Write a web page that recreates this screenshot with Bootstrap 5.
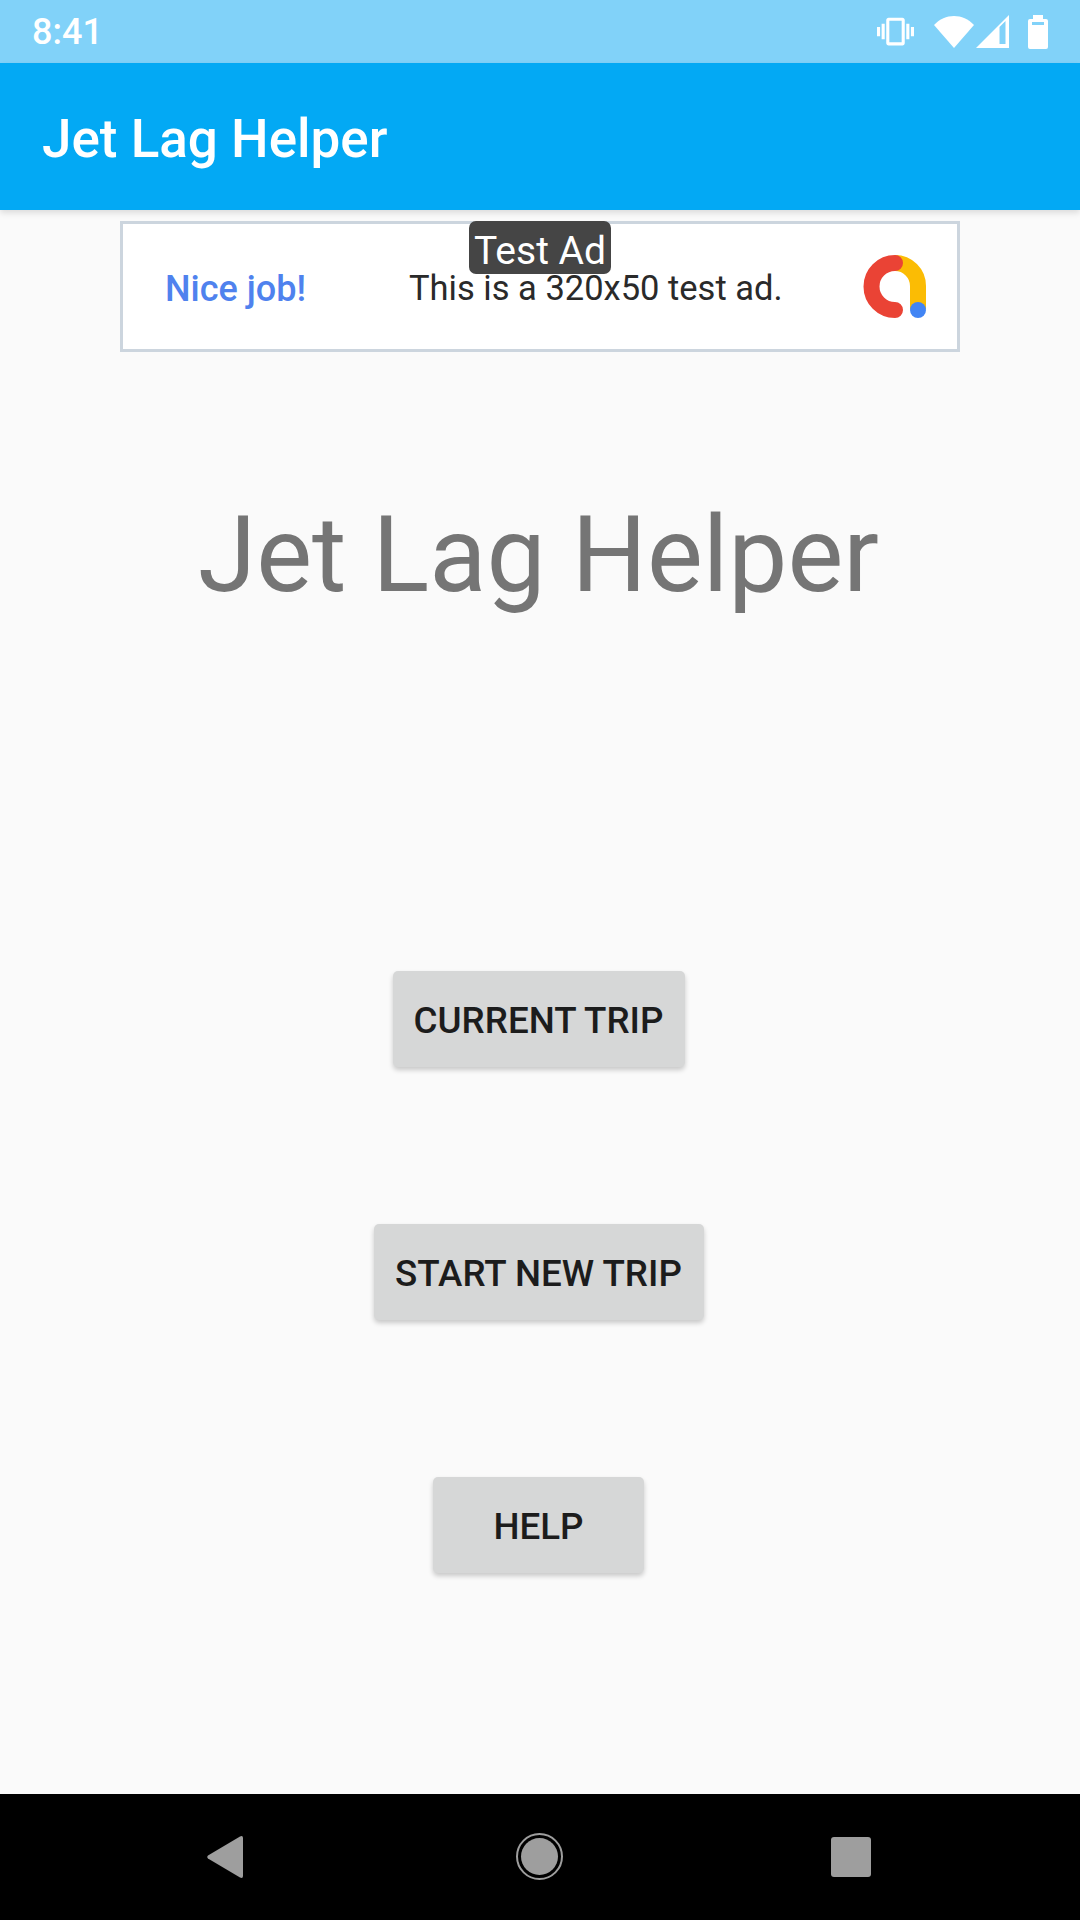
<!DOCTYPE html>
<html lang="en">
<head>
  <meta charset="UTF-8" />
  <title>Jet Lag Helper</title>
  <link href="https://cdn.jsdelivr.net/npm/bootstrap@5.3.3/dist/css/bootstrap.min.css" rel="stylesheet" />
  <style>
    body { width: 1080px; height: 1920px; background: #fafafa; font-family: Roboto, "Liberation Sans", sans-serif; overflow: hidden; }
    .status-strip { height: 63px; background: #81d2f9; padding-left: 32px; }
    .status-time { font-size: 36px; font-weight: 500; line-height: 1; }
    .status-icons { margin-left: auto; width: 203px; height: 63px; }
    .ico-vibrate { margin-right: 20px; }
    .ico-wifi { margin-right: 2px; }
    .ico-signal { margin-right: 19px; }
    .app-strip { height: 147px; background: #03a9f4; padding: 5px 0 0 42px; box-shadow: 0 3px 6px rgba(0,0,0,.12); }
    .app-title { font-size: 53px; font-weight: 500; line-height: 1; color: #fff; }
    .screen { height: 1584px; }
    .ad-box { width: 840px; height: 131px; margin-top: 11px; background: #fff; border: 3px solid #ccd5de; padding: 4px 0 0 42px; }
    .ad-tag { top: -3px; left: 346px; width: 142px; height: 53px; padding-top: 7px; background: #454545; color: #fff; border-radius: 7px; font-size: 39px; line-height: 46px; }
    .ad-nice { width: 244px; color: #4f82ee; font-size: 36px; font-weight: 500; }
    .ad-copy { width: 454px; color: #2a2a2a; font-size: 34.5px; }
    .ad-logo { margin-top: -4px; }
    .big-title { margin: 137px 3px 350px 0; font-size: 105.3px; line-height: 132px; color: #757575; font-weight: 400; }
    .trip-btn { height: 96px; margin: 0 3px 157px 0; padding: 4px 0 0; background: #d6d7d7; color: #1c1c1c; border: 0; border-radius: 5px; font-size: 36.75px; font-weight: 500; box-shadow: 0 3px 5px rgba(0,0,0,.2); }
    .trip-btn:hover { background: #d6d7d7; color: #1c1c1c; }
    .current-btn { width: 292px; }
    .start-btn { width: 330px; }
    .help-btn { width: 211px; }
    .nav-strip { height: 126px; background: #000; padding-left: 207px; }
    .ico-home { margin: -2px 268px 0 273px; }
  </style>
</head>
<body class="d-flex flex-column">
  <div class="status-strip d-flex align-items-center text-white">
    <span class="status-time">8:41</span>
    <div class="status-icons d-flex align-items-center">
      <svg class="ico-vibrate" width="37" height="37" viewBox="0 0 24 24" fill="#fff"><path d="M0 15h2V9H0v6zm3 2h2V7H3v10zm19-8v6h2V9h-2zm-3 8h2V7h-2v10zM16.5 3h-9C6.67 3 6 3.67 6 4.5v15c0 .83.67 1.5 1.5 1.5h9c.83 0 1.5-.67 1.5-1.5v-15c0-.83-.67-1.5-1.5-1.5zM16 19H8V5h8v14z"/></svg>
      <svg class="ico-wifi" width="40" height="32" viewBox="0 0 40 32" fill="#fff"><path d="M0 9C11-3 29-3 40 9L20 32Z"/></svg>
      <svg class="ico-signal" width="33" height="33" viewBox="0 0 33 33" fill="#fff"><path fill-rule="evenodd" d="M0 33 33 0V33ZM23.5 29H29.5V6L23.5 12Z"/></svg>
      <svg width="20" height="34" viewBox="0 0 20 34" fill="#fff"><path fill-rule="evenodd" d="M5 0H15V4H18Q20 4 20 6V32Q20 34 18 34H2Q0 34 0 32V6Q0 4 2 4H5ZM4 7V10H16V7Z"/></svg>
    </div>
  </div>

  <div class="app-strip d-flex align-items-center position-relative">
    <span class="app-title">Jet Lag Helper</span>
  </div>

  <main class="screen d-flex flex-column align-items-center">
    <div class="ad-box d-flex align-items-center position-relative">
      <span class="ad-tag position-absolute text-center">Test Ad</span>
      <span class="ad-nice">Nice job!</span>
      <span class="ad-copy">This is a 320x50 test ad.</span>
      <svg class="ad-logo" width="63" height="63" viewBox="0 0 63 63" fill="none">
        <path d="M32 8A23 23 0 0 1 55 31V54" stroke="#fbbc04" stroke-width="16"/>
        <path d="M32 8A23.5 23.5 0 0 0 32 55" stroke="#ea4335" stroke-width="16" stroke-linecap="round"/>
        <circle cx="55" cy="55" r="8" fill="#4285f4"/>
      </svg>
    </div>

    <h1 class="big-title text-center">Jet Lag Helper</h1>

    <button class="btn trip-btn current-btn" type="button">CURRENT TRIP</button>
    <button class="btn trip-btn start-btn" type="button">START NEW TRIP</button>
    <button class="btn trip-btn help-btn" type="button">HELP</button>
  </main>

  <div class="nav-strip d-flex align-items-center">
    <svg width="36" height="42" viewBox="0 0 36 42" fill="#9e9e9e"><path d="M1 19.5 33 .5Q36-.8 36 2V40Q36 42.8 33 41.5L1 22.5Q-.5 21 1 19.5Z"/></svg>
    <svg class="ico-home" width="47" height="47" viewBox="0 0 47 47"><circle cx="23.5" cy="23.5" r="22.5" fill="none" stroke="#9e9e9e" stroke-width="2"/><circle cx="23.5" cy="23.5" r="18.5" fill="#9e9e9e"/></svg>
    <svg width="40" height="40" viewBox="0 0 40 40" fill="#9e9e9e"><rect width="40" height="40" rx="3"/></svg>
  </div>
</body>
</html>
